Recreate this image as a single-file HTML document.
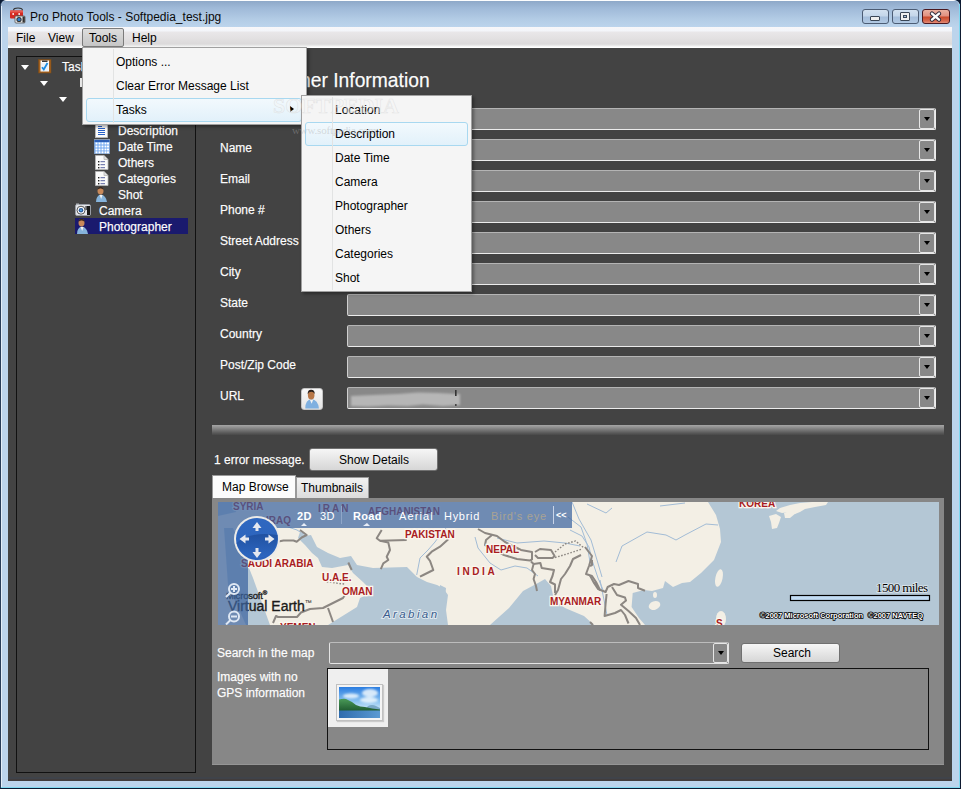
<!DOCTYPE html>
<html><head><meta charset="utf-8">
<style>
*{box-sizing:border-box;margin:0;padding:0}
html,body{width:961px;height:789px;overflow:hidden;background:#0b1a33}
body{position:relative;font-family:"Liberation Sans",sans-serif;font-size:12px;color:#000}
.a{position:absolute}
.t{position:absolute;white-space:nowrap;line-height:14px}
#win{left:0;top:0;width:960px;height:788px;background:#bcd4ec;border-radius:6px 6px 0 0;border-left:1px solid #2a3e5a}
#title{left:1px;top:0;width:958px;height:27px;background:linear-gradient(#fdfdfe 0,#fdfdfe 1px,#8ea8c8 1px,#9fb9d8 8px,#b4cde6 20px,#bcd4ec 27px);border-radius:6px 6px 0 0}
#menubar{left:8px;top:27px;width:944px;height:21px;background:linear-gradient(#f9f7f9 0,#f3f5fa 4px,#e9e7e9 5px,#e2e0e1 12px,#dbd9da 17px,#eeeeee 19px,#ffffff 20px)}
#dark{left:8px;top:48px;width:944px;height:733px;background:#434343}
.w{color:#fcfcfc;-webkit-text-stroke:0.25px rgba(255,255,255,0.8)}
.field{position:absolute;left:347px;width:589px;height:22px;background:#888;border:1px solid #ececec;border-top-color:#b4b4b4;border-left-color:#cfcfcf;border-radius:2px}
.dd{position:absolute;right:0;top:0;width:16px;height:20px;border:1px solid #e6e6e6;border-radius:2px;background:#888}
.dd:after{content:"";position:absolute;left:4px;top:7px;border-left:3.5px solid transparent;border-right:3.5px solid transparent;border-top:4px solid #000}
.arr{position:absolute;width:0;height:0;border-left:4px solid transparent;border-right:4px solid transparent;border-top:5px solid #fff}
.mi{position:absolute;white-space:nowrap;line-height:14px;color:#000}
</style></head><body>
<div id="win" class="a"></div>
<div id="title" class="a"></div>
<div class="t" style="left:30px;top:10px;color:#0a0a0a">Pro Photo Tools - Softpedia_test.jpg</div>
<div id="menubar" class="a"></div>
<div class="t" style="left:16px;top:31px">File</div>
<div class="t" style="left:48px;top:31px">View</div>
<div class="a" style="left:82px;top:28px;width:42px;height:19px;border:1px solid #7b7b7b;border-radius:2px;background:linear-gradient(#dedede,#cfcfcf 60%,#c6c6c6)"></div>
<div class="t" style="left:89px;top:31px">Tools</div>
<div class="t" style="left:132px;top:31px">Help</div>
<div id="dark" class="a"></div>
<div class="a" style="left:8px;top:777px;width:944px;height:2px;background:#3f434a"></div>
<div class="a" style="left:8px;top:779px;width:944px;height:2px;background:#423d3d"></div>

<!-- tree panel -->
<div class="a" style="left:16px;top:56px;width:180px;height:717px;border:1px solid #111"></div>
<div class="arr" style="left:21px;top:65px"></div>
<div class="arr" style="left:40px;top:81px"></div>
<div class="arr" style="left:59px;top:97px"></div>
<div class="a" style="left:80px;top:78px;width:2px;height:9px;background:#e8e8e8"></div>
<div class="t w" style="left:62px;top:60px">Tasks</div>
<div class="t w" style="left:118px;top:124px">Description</div>
<div class="t w" style="left:118px;top:140px">Date Time</div>
<div class="t w" style="left:118px;top:156px">Others</div>
<div class="t w" style="left:118px;top:172px">Categories</div>
<div class="t w" style="left:118px;top:188px">Shot</div>
<div class="t w" style="left:99px;top:204px">Camera</div>
<div class="a" style="left:75px;top:218px;width:113px;height:16px;background:#1a1a6e"></div>
<div class="t w" style="left:99px;top:220px">Photographer</div>


<!-- app icon -->
<svg class="a" style="left:9px;top:7px" width="18" height="18" viewBox="0 0 18 18">
<path d="M4.5 3.5 Q4.5 1 9 1 Q13.5 1 13.5 3.5" fill="none" stroke="#333" stroke-width="1.2"/>
<rect x="1" y="3.5" width="13" height="8" rx="1" fill="#d42a22"/>
<rect x="1" y="3.5" width="13" height="2" fill="#e85a50"/>
<rect x="3.5" y="6" width="1.3" height="2" fill="#fff"/><rect x="9.5" y="6" width="1.3" height="2" fill="#fff"/>
<rect x="6" y="9" width="10" height="7" rx="1" fill="#e8e8e8" stroke="#555" stroke-width="0.8"/>
<rect x="13.5" y="9.5" width="2.3" height="6" fill="#333"/>
<circle cx="10" cy="12.5" r="2.6" fill="#333"/><circle cx="10" cy="12.5" r="1.6" fill="#2f7fd0"/>
<rect x="8" y="8" width="2" height="1.2" fill="#555"/>
</svg>
<!-- window buttons -->
<div class="a" style="left:862px;top:9px;width:27px;height:15px;border:1px solid #4c5c74;border-radius:3px;background:linear-gradient(#d3e1f0 0,#c4d6ea 6px,#a5bedb 7px,#b4cbe5 14px)"></div>
<div class="a" style="left:870px;top:16px;width:10px;height:5px;border:1px solid #3a4656;border-radius:1px;background:#eee"></div>
<div class="a" style="left:892px;top:9px;width:27px;height:15px;border:1px solid #4c5c74;border-radius:3px;background:linear-gradient(#d3e1f0 0,#c4d6ea 6px,#a5bedb 7px,#b4cbe5 14px)"></div>
<div class="a" style="left:900px;top:12px;width:10px;height:9px;border:1px solid #3a4656;border-radius:1px;background:#eee"></div>
<div class="a" style="left:903px;top:15px;width:4px;height:3px;border:1px solid #3a4656;background:#a8c0dc"></div>
<div class="a" style="left:922px;top:9px;width:28px;height:15px;border:1px solid #4a1820;border-radius:3px;background:linear-gradient(#eab0a0 0,#e29080 6px,#c94a2c 7px,#d86a50 11px,#e8a090 14px)"></div>
<svg class="a" style="left:929px;top:11px" width="13" height="11" viewBox="0 0 13 11"><path d="M3 2.6 L10 8.6 M10 2.6 L3 8.6" stroke="#2e2a3a" stroke-width="4.2" stroke-linecap="round"/><path d="M3 2.6 L10 8.6 M10 2.6 L3 8.6" stroke="#fdfdfd" stroke-width="2.4" stroke-linecap="round"/></svg>
<!-- frame right edge -->
<div class="a" style="left:959px;top:4px;width:1px;height:784px;background:#7fd8f0"></div>
<div class="a" style="left:960px;top:4px;width:1px;height:785px;background:#0e1a30"></div>
<div class="a" style="left:1px;top:787px;width:958px;height:1px;background:#7fd8f0"></div>
<div class="a" style="left:1px;top:6px;width:1px;height:781px;background:#e4eef8"></div>

<!-- tree icons -->
<svg class="a" style="left:38px;top:59px" width="14" height="15" viewBox="0 0 14 15">
<rect x="0.5" y="0.5" width="12.5" height="13.5" fill="#a2601e" stroke="#7a4a18" stroke-width="0.6"/>
<rect x="2.5" y="1.5" width="8.5" height="11" fill="#fdfdfd"/>
<rect x="4" y="1.5" width="5.5" height="1.5" fill="#3a3a3a"/>
<g stroke="#cfe0f0" stroke-width="0.8"><line x1="3" y1="5" x2="10.5" y2="5"/><line x1="3" y1="7" x2="10.5" y2="7"/><line x1="3" y1="9" x2="10.5" y2="9"/><line x1="3" y1="11" x2="10.5" y2="11"/></g>
<path d="M4 8.2 L5.8 10.5 L9.5 4" fill="none" stroke="#1a8ae0" stroke-width="1.8"/>
</svg>
<svg class="a" style="left:95px;top:124px" width="13" height="14" viewBox="0 0 13 14">
<rect x="0.5" y="0.5" width="12" height="13" fill="#fbfbfb" stroke="#c0c0c0" stroke-width="0.8"/>
<g stroke="#2a62c8" stroke-width="1"><line x1="3" y1="2.5" x2="7" y2="2.5"/><line x1="3" y1="4.5" x2="10" y2="4.5"/><line x1="3" y1="6.5" x2="10" y2="6.5"/><line x1="3" y1="8.5" x2="10" y2="8.5"/><line x1="3" y1="10.5" x2="10" y2="10.5"/></g>
</svg>
<svg class="a" style="left:94px;top:139px" width="16" height="15" viewBox="0 0 16 15">
<rect x="0" y="0" width="16" height="15" fill="#8a9ab0"/>
<rect x="0.5" y="1" width="15" height="13.5" fill="#6ea6f0"/>
<rect x="0.5" y="1.2" width="15" height="1.6" fill="#1f4fa8"/>
<g fill="#fff">
<rect x="1.5" y="3.5" width="2" height="2"/><rect x="4.5" y="3.5" width="2" height="2"/><rect x="7.5" y="3.5" width="2" height="2"/><rect x="10.5" y="3.5" width="2" height="2"/><rect x="13" y="3.5" width="2" height="2"/>
<rect x="1.5" y="6.5" width="2" height="2"/><rect x="4.5" y="6.5" width="2" height="2"/><rect x="7.5" y="6.5" width="2" height="2"/><rect x="10.5" y="6.5" width="2" height="2"/><rect x="13" y="6.5" width="2" height="2"/>
<rect x="1.5" y="9.5" width="2" height="2"/><rect x="4.5" y="9.5" width="2" height="2"/><rect x="7.5" y="9.5" width="2" height="2"/><rect x="10.5" y="9.5" width="2" height="2"/><rect x="13" y="9.5" width="2" height="2"/>
<rect x="1.5" y="12.3" width="2" height="2"/><rect x="4.5" y="12.3" width="2" height="2"/><rect x="7.5" y="12.3" width="2" height="2"/><rect x="10.5" y="12.3" width="2" height="2"/><rect x="13" y="12.3" width="2" height="2"/>
</g>
</svg>
<svg class="a" style="left:95px;top:155px" width="14" height="15" viewBox="0 0 14 15">
<path d="M0.5 0.5 H9 L13 4.5 V14.5 H0.5 Z" fill="#fafafa" stroke="#b8b8b8" stroke-width="0.8"/>
<path d="M9 0.5 V4.5 H13" fill="#e0e0e0" stroke="#b8b8b8" stroke-width="0.8"/>
<g fill="#222"><rect x="3" y="6" width="1.4" height="1.4"/><rect x="3" y="9" width="1.4" height="1.4"/><rect x="3" y="12" width="1.4" height="1.4"/></g>
<g stroke="#5a64a0" stroke-width="1"><line x1="5.5" y1="6.7" x2="10" y2="6.7"/><line x1="5.5" y1="9.7" x2="10" y2="9.7"/><line x1="5.5" y1="12.7" x2="10" y2="12.7"/></g>
</svg>
<svg class="a" style="left:95px;top:171px" width="14" height="15" viewBox="0 0 14 15">
<path d="M0.5 0.5 H9 L13 4.5 V14.5 H0.5 Z" fill="#fafafa" stroke="#b8b8b8" stroke-width="0.8"/>
<path d="M9 0.5 V4.5 H13" fill="#e0e0e0" stroke="#b8b8b8" stroke-width="0.8"/>
<g fill="#222"><rect x="3" y="6" width="1.4" height="1.4"/><rect x="3" y="9" width="1.4" height="1.4"/><rect x="3" y="12" width="1.4" height="1.4"/></g>
<g stroke="#5a64a0" stroke-width="1"><line x1="5.5" y1="6.7" x2="10" y2="6.7"/><line x1="5.5" y1="9.7" x2="10" y2="9.7"/><line x1="5.5" y1="12.7" x2="10" y2="12.7"/></g>
</svg>
<svg class="a" style="left:95px;top:186px" width="13" height="17" viewBox="0 0 13 17">
<path d="M1 16 Q1 9.5 6 8.5 Q11 9.5 12 16 Z" fill="#86b4dc"/>
<path d="M4.5 9 L6.2 13 L7.5 9 Z" fill="#f4f4f4"/>
<ellipse cx="5.5" cy="4.8" rx="3" ry="3.8" fill="#c8895a"/>
<path d="M2.5 4 Q2.8 0.6 5.6 0.8 Q8.4 0.8 8.5 4 Q7.5 2.3 5.5 2.5 Q3.5 2.3 2.5 4 Z" fill="#3a2a22"/>
</svg>
<svg class="a" style="left:75px;top:203px" width="16" height="13" viewBox="0 0 16 13">
<rect x="0.5" y="1.5" width="15" height="11" rx="1.5" fill="#e4e6ea" stroke="#9aa0a8" stroke-width="0.8"/>
<rect x="1" y="0.5" width="3" height="1.5" fill="#b0b4ba"/>
<rect x="12" y="3" width="3" height="9" fill="#1a1a1a"/>
<rect x="10.5" y="3" width="1.2" height="4" fill="#222"/>
<circle cx="6" cy="7.2" r="4" fill="#fff" stroke="#555" stroke-width="1"/>
<circle cx="6" cy="7.2" r="2.3" fill="#2a5a98"/>
<circle cx="6" cy="7.2" r="1" fill="#5ab0f0"/>
</svg>
<svg class="a" style="left:76px;top:218px" width="13" height="17" viewBox="0 0 13 17">
<path d="M1 16 Q1 9.5 6 8.5 Q11 9.5 12 16 Z" fill="#86b4dc"/>
<path d="M4.5 9 L6.2 13 L7.5 9 Z" fill="#f4f4f4"/>
<ellipse cx="5.5" cy="4.8" rx="3" ry="3.8" fill="#c8895a"/>
<path d="M2.5 4 Q2.8 0.6 5.6 0.8 Q8.4 0.8 8.5 4 Q7.5 2.3 5.5 2.5 Q3.5 2.3 2.5 4 Z" fill="#3a2a22"/>
</svg>

<!-- heading -->
<div class="t w" style="left:211px;top:70.7px;font-size:19.3px;line-height:20px">Photographer Information</div>

<!-- form -->
<div class="t w" style="left:220px;top:110px">Company</div>
<div class="t w" style="left:220px;top:141px">Name</div>
<div class="t w" style="left:220px;top:172px">Email</div>
<div class="t w" style="left:220px;top:203px">Phone #</div>
<div class="t w" style="left:220px;top:234px">Street Address</div>
<div class="t w" style="left:220px;top:265px">City</div>
<div class="t w" style="left:220px;top:296px">State</div>
<div class="t w" style="left:220px;top:327px">Country</div>
<div class="t w" style="left:220px;top:358px">Post/Zip Code</div>
<div class="t w" style="left:220px;top:389px">URL</div>
<div class="field" style="top:108px"><div class="dd"></div></div>
<div class="field" style="top:139px"><div class="dd"></div></div>
<div class="field" style="top:170px"><div class="dd"></div></div>
<div class="field" style="top:201px"><div class="dd"></div></div>
<div class="field" style="top:232px"><div class="dd"></div></div>
<div class="field" style="top:263px"><div class="dd"></div></div>
<div class="field" style="top:294px"><div class="dd"></div></div>
<div class="field" style="top:325px"><div class="dd"></div></div>
<div class="field" style="top:356px"><div class="dd"></div></div>
<div class="field" style="top:387px"><div class="dd"></div></div>
<div class="a" style="left:301px;top:388px;width:22px;height:22px;border:1px solid #c4c4c4;border-radius:3px;background:linear-gradient(#f8f8f8,#e4e4e4)"></div>

<svg class="a" style="left:303px;top:389px" width="18" height="20" viewBox="0 0 13 17">
<path d="M0.8 16.5 Q0.8 9.5 6 8.6 Q11.6 9.5 12.4 16.5 Z" fill="#7fb0e0"/>
<path d="M4.6 9 L6.2 12.5 L7.6 9 Z" fill="#f4f4f4"/>
<ellipse cx="5.8" cy="5" rx="2.8" ry="3.9" fill="#b87848"/>
<path d="M2.8 4.5 Q2.8 0.6 5.8 0.7 Q8.8 0.7 8.8 4.2 Q7.8 2.3 5.8 2.4 Q3.8 2.4 2.8 4.5 Z" fill="#2a221e"/>
</svg>
<svg class="a" style="left:348px;top:388px" width="116" height="22" viewBox="0 0 116 22">
<defs><filter id="bl" x="-10%" y="-30%" width="120%" height="160%"><feGaussianBlur stdDeviation="0.9"/></filter></defs>
<path d="M3 8 L25 7 L50 6 L70 4.5 L90 5 L108 6 L112 6 L112 17 L95 18 L75 16.5 L60 18 L40 17.5 L20 18.5 L3 18 Z" fill="#b6b6b6" filter="url(#bl)"/>
<rect x="107" y="2" width="1.6" height="6" fill="#333"/>
<rect x="107" y="16" width="1.6" height="2" fill="#444"/>
</svg>
<!-- separator -->
<div class="a" style="left:212px;top:425px;width:732px;height:10px;background:linear-gradient(#a6a6a6,#8a8a8a 30%,#5e5e5e 75%,#484848)"></div>

<div class="t w" style="left:214px;top:453px">1 error message.</div>
<div class="a" style="left:309px;top:448px;width:129px;height:23px;border:1px solid #707070;border-radius:3px;background:linear-gradient(#f6f6f6,#e6e6e6 50%,#d6d6d6)"></div>
<div class="t" style="left:339px;top:453px">Show Details</div>

<!-- tabs -->
<div class="a" style="left:212px;top:498px;width:732px;height:267px;background:#878787;border-bottom:1px solid #959595"></div>
<div class="a" style="left:212px;top:475px;width:84px;height:23px;background:#fcfcfc;border:1px solid #9a9a9a;border-bottom:none"></div>
<div class="t" style="left:222px;top:480px">Map Browse</div>
<div class="a" style="left:296px;top:477px;width:73px;height:21px;background:linear-gradient(#f2f2f2,#dcdcdc);border:1px solid #9a9a9a;border-bottom:none"></div>
<div class="t" style="left:301px;top:481px">Thumbnails</div>

<!-- map placeholder -->
<svg class="a" style="left:218px;top:502px" width="721" height="123" viewBox="218 502 721 123">
<rect x="218" y="502" width="721" height="123" fill="#f3efe5"/>
<g fill="#b4c7d5">
<polygon points="300,532 305,536 311,535 317,547 328,553 340,558 351,556 357,565 373,568 407,567 417,577 427,582 437,585 443,588 448,595 446,610 448,625 328,625 357,607 360,598 373,592 363,582 353,573 348,565 332,568 322,567 318,558 312,553 305,545 298,538"/>
<polygon points="224,528 233,528 249,568 253,578 270,625 246,625 228,585"/>
<polygon points="218,502 240,502 236,512 218,516"/>
<polygon points="490,625 509,608 523,591 538,583 545,579 551,586 554,600 565,608 584,616 594,625"/>
<polygon points="440,585 446,588 443,625 440,625"/>
<polygon points="645,625 639,618 631.6,607 632.7,593 644,590 652,591 663,588 665,581 673,587 682,583 690,582 701,573 714,560 721,542 720,529 716,515 708,502 939,502 939,625"/>
</g>
<g fill="#f3efe5">
<polygon points="776,511 780,508 790,505 800,503 812,502 828,502 826,505 815,507 805,509 800,512 795,514 790,512 782,513"/>
<polygon points="769,516 776,514 781,517 779,523 777,528 772,529 771,522"/>
<polygon points="784,513 792,510 796,513 790,518 785,518"/>
<ellipse cx="654.5" cy="605.5" rx="6" ry="4.2" transform="rotate(-20 654.5 605.5)"/>
<ellipse cx="719" cy="578" rx="3.6" ry="9" transform="rotate(12 719 578)"/>
<ellipse cx="721" cy="619" rx="5" ry="8"/>
<ellipse cx="655" cy="595" rx="2" ry="3"/>
</g>
<g fill="none" stroke="#a2bcd6" stroke-width="1">
<polyline points="416.7,575 420,558 428,550 435,542 440,535 446,528"/>
<polyline points="305,535 297,530 288,527"/>
<polyline points="475,537 478,548 490,563 501,570 515,566 527,568 538,576"/>
<polyline points="497,538 517,543 544,541 565,543 580,546"/>
<polyline points="570,530 582,536 589,547 592,560 598,578 604,592"/>
<polyline points="572,502 579,519 591,540 597,560 602,577"/>
<polyline points="568,517 581,527 587,544 590,562"/>
<polyline points="587,504 606,513 612,508"/>
<polyline points="616,562 622,546 647,532 666,535 676,540 685,535 706,524 718,525"/>
<polyline points="660,506 685,503"/>
<polyline points="600,580 604,600 607,615"/>
</g>
<g fill="none" stroke="#8c8782" stroke-width="2" stroke-linejoin="round">
<polyline points="273.5,542.5 283.5,540.5 293.5,540.5 296.7,541.7 301.7,537.5 306.7,535 300,530"/>
<polyline points="273,623 276,616 278,617 297,617 301,612.5 310,609 323,608 343,598 345,595"/>
<polyline points="328,608 333,622"/>
<polyline points="348.3,562.5 351.7,570"/>
<polyline points="381.7,530 376.7,538.3 380,540.8 388.3,542.5 390,550 386.7,556.7 388.3,560 383.3,563.3 380.8,569.2"/>
<polyline points="380,540.8 406.7,540"/>
<polyline points="448.3,539.2 440,546.7 431.7,551.7 426.7,556.7 430,560.8 433.3,570 423.3,575 420,576.7"/>
<polyline points="478,529 485,533 493,535 497,536 505,542 515,547 521,550 532,552 532,560"/>
<polyline points="492,535 486,540 485,545 504,555 517,559 530,560.5 532,559.5"/>
<polyline points="535,552 540,549 551,550 554.6,556 552.5,558 538,558 535,555"/>
<polyline points="585,547 592,556 589,566 586,574 592,576 596,582 600,590 594,582"/>
<polyline points="581,555 573,559 570,566 565,574 561,579 558,590 555,595"/>
<polyline points="531,561.5 533.6,564 532,570 535,574 533.6,579 536,586 537,591"/>
<polyline points="533.6,564 540.4,563 541.7,568 554,570 552.5,576 550,582 555,584.5 555,593"/>
<polyline points="590,575.6 594,583 598,589 605.6,592 607.7,587 614,584 619,585 628.5,581 638,584 638,588 645,590.7"/>
<polyline points="612,587 617,595 625,597.5 626,600.6 621,604.7 628.5,611 636,618 640,625"/>
<polyline points="606.6,594 605.6,603.7 604.6,616 615,613 621,610 625,615 628.5,623.5"/>
<polyline points="590,622 593,625"/>
<polyline points="592,560 592,565 590,566"/>
</g>
<g fill="none" stroke="#8c8782" stroke-width="1.5" stroke-dasharray="1.6 1.6">
<polyline points="555,552 565,544 575.5,541 584,548"/>
<polyline points="555,557.5 567,554 581,549.4"/>
<polyline points="326.7,581.7 345,584.2"/>
</g>
<g font-family="Liberation Sans" font-weight="bold" font-size="10" fill="#a81c22" stroke="#fbf6ee" stroke-width="2.5" paint-order="stroke">
<text x="233" y="510">SYRIA</text>
<text x="318" y="512" letter-spacing="2">IRAN</text>
<text x="368" y="515">AFGHANISTAN</text>
<text x="266" y="524">IRAQ</text>
<text x="405" y="538">PAKISTAN</text>
<text x="241" y="567">SAUDI ARABIA</text>
<text x="322" y="581">U.A.E.</text>
<text x="342" y="595">OMAN</text>
<text x="280" y="631">YEMEN</text>
<text x="486" y="553">NEPAL</text>
<text x="457" y="575" letter-spacing="2.6">INDIA</text>
<text x="550" y="605">MYANMAR</text>
<text x="739" y="507">KOREA</text>
<text x="716" y="627">S</text>
</g>
<text x="383" y="618" font-family="Liberation Sans" font-style="italic" font-size="11.5" letter-spacing="2.4" fill="#3b5d8c" stroke="#dfe8ef" stroke-width="2" paint-order="stroke">Arabian</text>
<text x="226" y="598.5" font-family="Liberation Sans" font-size="9.5" fill="#1a1a1a" stroke="#1a1a1a" stroke-width="0.3" letter-spacing="-0.2">Microsoft<tspan font-size="6" dy="-4">®</tspan></text>
<text x="228" y="610.5" font-family="Liberation Sans" font-size="14" fill="#1a1a1a" stroke="#1a1a1a" stroke-width="0.35">Virtual Earth<tspan font-size="7" dy="-6" stroke-width="0">™</tspan></text>
<!-- overlay toolbar & left strip -->
<rect x="218" y="502" width="354" height="26" fill="#3c64a0" fill-opacity="0.72"/>
<rect x="218" y="528" width="30" height="97" fill="#3c64a0" fill-opacity="0.72"/>
<g font-family="Liberation Sans" font-size="11" fill="#fff">
<text x="297" y="520" font-weight="bold" letter-spacing="0.5">2D</text>
<text x="320" y="520" letter-spacing="0.5">3D</text>
<text x="353" y="520" font-weight="bold" letter-spacing="0.3">Road</text>
<text x="399" y="520" letter-spacing="1.1">Aerial</text>
<text x="444" y="520" letter-spacing="0.7">Hybrid</text>
<text x="491" y="520" fill="#a9a393" letter-spacing="0.8">Bird's eye</text>
<text x="556" y="518" font-size="9" font-weight="bold">&lt;&lt;</text>
</g>
<rect x="341" y="506" width="1" height="18" fill="#8fa6c8"/>
<rect x="553" y="506" width="1" height="18" fill="#c8d4e8"/>
<polygon points="301,526 304,523 307,526" fill="#e8eef8"/>
<polygon points="363,526 367,523 370,526" fill="#e8eef8"/>
<defs><linearGradient id="ng" x1="0" y1="0" x2="0" y2="1"><stop offset="0" stop-color="#2f68c0"/><stop offset="1" stop-color="#2a62bc"/></linearGradient>
<linearGradient id="ng2" x1="0" y1="0" x2="0" y2="1"><stop offset="0" stop-color="#1f4f9e"/><stop offset="1" stop-color="#2e68c2"/></linearGradient></defs>
<circle cx="257" cy="539" r="23" fill="#ecebe8"/>
<circle cx="257" cy="539" r="21" fill="url(#ng)"/>
<path d="M236.5 543 Q250 531 277.5 535 A21 21 0 0 1 236.5 543 Z" fill="url(#ng2)" opacity="0.9"/>
<g fill="#e4e8f0">
<polygon points="257,522 252.5,528 255.5,528 255.5,531 258.5,531 258.5,528 261.5,528"/>
<polygon points="257,558 252.5,552 255.5,552 255.5,548 258.5,548 258.5,552 261.5,552"/>
<polygon points="239.5,539 245.5,534.5 245.5,537.5 249,537.5 249,540.5 245.5,540.5 245.5,543.5"/>
<polygon points="274.5,539 268.5,534.5 268.5,537.5 265,537.5 265,540.5 268.5,540.5 268.5,543.5"/>
</g>
<g fill="none" stroke="#dfe8f4" stroke-width="2">
<circle cx="234" cy="589" r="5"/><line x1="230.5" y1="592.5" x2="226" y2="597"/>
<circle cx="234" cy="616.5" r="5"/><line x1="230.5" y1="620" x2="226" y2="624.5"/>
</g>
<g fill="#dfe8f4"><rect x="231" y="588" width="6" height="2"/><rect x="233" y="586" width="2" height="6"/><rect x="231" y="615.5" width="6" height="2"/></g>

<text x="876" y="592" font-family="Liberation Serif" font-size="13" fill="#000" stroke="#dfe8ef" stroke-width="1.5" paint-order="stroke" letter-spacing="-0.6">1500 miles</text>
<rect x="790.5" y="595.5" width="139" height="5" fill="#c2dcf4" stroke="#000" stroke-width="1.2"/>
<g font-family="Liberation Sans" font-size="7.5" font-weight="bold" fill="#fff" stroke="#000" stroke-width="1.6" paint-order="stroke">
<text x="760" y="618">©2007 Microsoft Corporation</text>
<text x="868" y="618">©2007 NAVTEQ</text>
</g>
</svg>

<!-- search -->
<div class="t w" style="left:217px;top:646px">Search in the map</div>
<div class="a" style="left:329px;top:642px;width:400px;height:22px;border:1px solid #e4e4e4;border-top-color:#bcbcbc;border-radius:2px;background:#888"><div class="dd" style="width:15px;height:20px"></div></div>
<div class="a" style="left:741px;top:643px;width:99px;height:20px;border:1px solid #707070;border-radius:3px;background:linear-gradient(#f6f6f6,#e6e6e6 50%,#d6d6d6)"></div>
<div class="t" style="left:773px;top:646px">Search</div>
<div class="t w" style="left:217px;top:670px">Images with no</div>
<div class="t w" style="left:217px;top:686px">GPS information</div>
<div class="a" style="left:327px;top:668px;width:602px;height:82px;border:1px solid #111;background:#878787"></div>
<div class="a" style="left:328px;top:669px;width:60px;height:58px;background:#efefef"></div>

<div class="a" style="left:336px;top:684px;width:47px;height:37px;border:1px solid #c0c0c0;background:#f4f4f4;box-shadow:1px 1px 1px rgba(0,0,0,.15)"></div>
<svg class="a" style="left:339px;top:687px" width="41" height="31" viewBox="0 0 41 31">
<defs><linearGradient id="sky" x1="0" y1="0" x2="0" y2="1"><stop offset="0" stop-color="#2a7ce0"/><stop offset="0.45" stop-color="#86c0f0"/><stop offset="0.75" stop-color="#d8ecfa"/></linearGradient>
<linearGradient id="sea" x1="0" y1="0" x2="1" y2="0"><stop offset="0" stop-color="#2f6cae"/><stop offset="1" stop-color="#5b9ad2"/></linearGradient>
<linearGradient id="hill" x1="0" y1="0" x2="0" y2="1"><stop offset="0" stop-color="#4a9a58"/><stop offset="1" stop-color="#1f5a30"/></linearGradient>
<filter id="cb"><feGaussianBlur stdDeviation="1.2"/></filter></defs>
<rect width="41" height="31" fill="url(#sky)"/>
<g fill="#eef7fd" opacity="0.85" filter="url(#cb)"><ellipse cx="31" cy="6" rx="8" ry="4"/><ellipse cx="12" cy="9" rx="8" ry="2.5"/><ellipse cx="30" cy="13" rx="9" ry="3"/></g>
<path d="M29 19 Q33 17 37 19 L41 21 V23 H26 Z" fill="#7aa8c8"/>
<path d="M0 12.5 Q4 11.5 7 12 Q12 14 17 18 Q21 20 26 20 Q33 21.5 41 22.5 V24 H0 Z" fill="url(#hill)"/>
<rect y="23.5" width="41" height="7.5" fill="url(#sea)"/>
</svg>

<!-- tools menu -->
<div class="a" style="left:82px;top:47px;width:225px;height:78px;background:#f5f5f5;border:1px solid #a0a0a0;box-shadow:2px 2px 3px rgba(0,0,0,.35)"></div>
<div class="a" style="left:86px;top:98px;width:216px;height:24px;border:1px solid #a8d8f0;border-radius:3px;background:linear-gradient(#f2f9fd,#e2f1fa)"></div>
<div class="a" style="left:113px;top:49px;width:1px;height:74px;background:#e2e3e3"></div>
<div class="mi" style="left:116px;top:55px">Options ...</div>
<div class="mi" style="left:116px;top:79px">Clear Error Message List</div>
<div class="mi" style="left:116px;top:103px">Tasks</div>
<div class="a" style="left:290px;top:106px;width:0;height:0;border-top:3.5px solid transparent;border-bottom:3.5px solid transparent;border-left:4px solid #000"></div>

<!-- submenu -->
<div class="a" style="left:301px;top:95px;width:171px;height:197px;background:#f5f5f5;border:1px solid #a0a0a0;box-shadow:2px 2px 3px rgba(0,0,0,.35)"></div>
<div class="a" style="left:305px;top:122px;width:163px;height:24px;border:1px solid #a8d8f0;border-radius:3px;background:linear-gradient(#f2f9fd,#e2f1fa)"></div>
<div class="a" style="left:332px;top:97px;width:1px;height:193px;background:#e2e3e3"></div>
<div class="mi" style="left:335px;top:103px">Location</div>
<div class="mi" style="left:335px;top:127px">Description</div>
<div class="mi" style="left:335px;top:151px">Date Time</div>
<div class="mi" style="left:335px;top:175px">Camera</div>
<div class="mi" style="left:335px;top:199px">Photographer</div>
<div class="mi" style="left:335px;top:223px">Others</div>
<div class="mi" style="left:335px;top:247px">Categories</div>
<div class="mi" style="left:335px;top:271px">Shot</div>
<div class="t" style="left:273px;top:95px;font-family:'Liberation Serif',serif;font-weight:bold;font-size:22px;line-height:22px;letter-spacing:0px;color:rgba(245,245,245,0.45);-webkit-text-stroke:0.6px rgba(205,205,205,0.45)">SOFTPEDIA</div>
<div class="t" style="left:292px;top:124px;font-family:'Liberation Serif',serif;font-size:11px;line-height:12px;letter-spacing:-0.2px;color:rgba(170,170,170,0.4)">www.softpedia.com</div>
</body></html>
